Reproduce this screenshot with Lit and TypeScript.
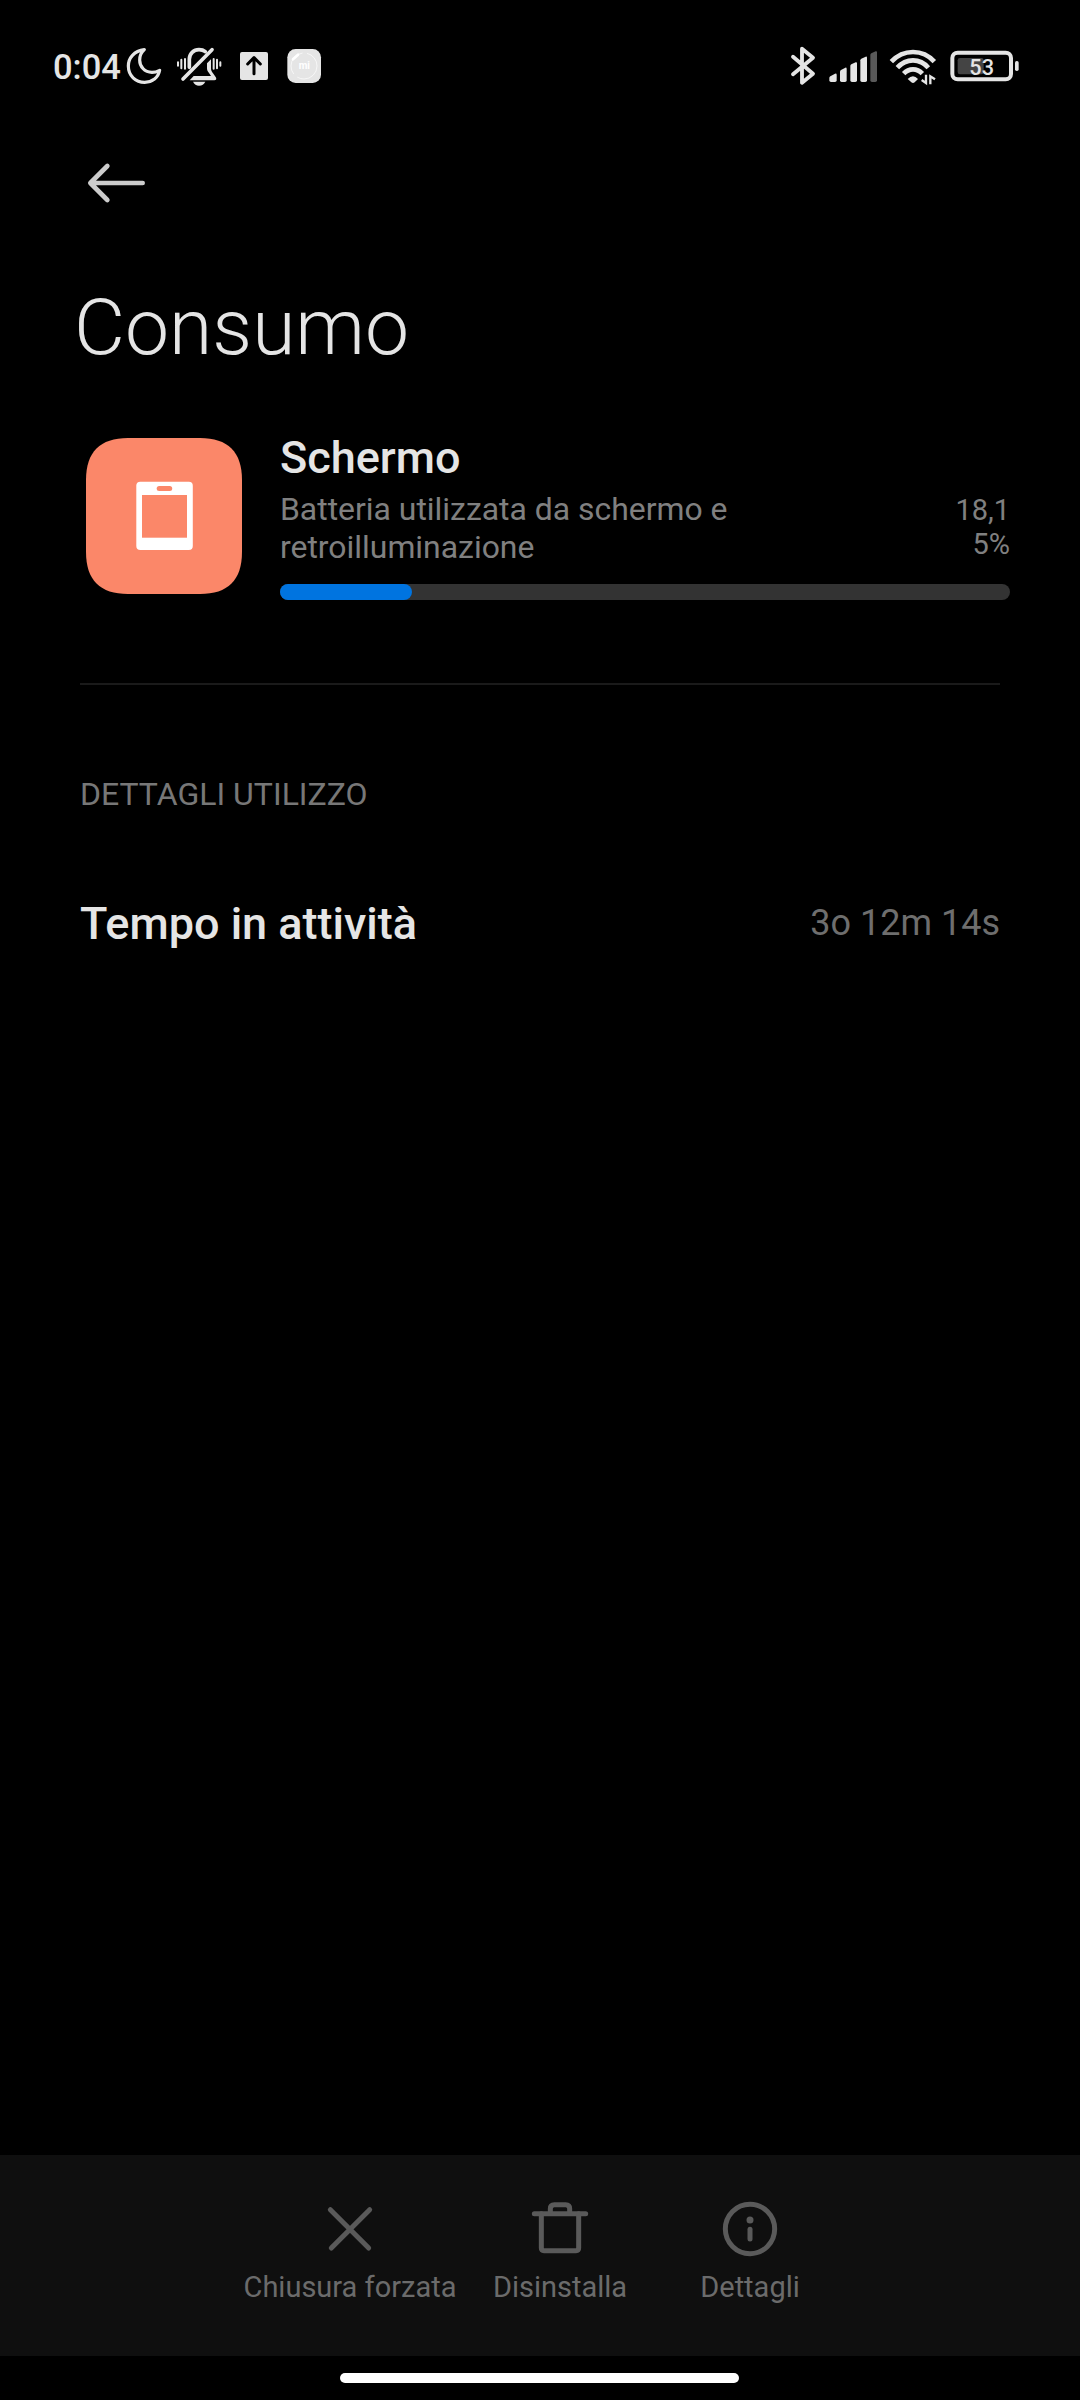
import { LitElement, html, css, svg } from "lit";
import { customElement, property } from "lit/decorators.js";

@customElement("status-bar")
class StatusBar extends LitElement {
  static styles = css`
    :host { display: block; }
    .bar { display: flex; justify-content: space-between; height: 132px; padding: 0 61px 0 53px; box-sizing: border-box; }
    .side { display: flex; align-items: center; }
    .time { font-size: 34.5px; font-weight: 500; line-height: 40px; color: #e5e5e5; width: 72px; padding-top: 2px; white-space: nowrap; }
    svg { display: block; flex: none; }
    .bell { margin-left: 13px; }
    .up { margin-left: 17px; }
    .mi { margin-left: 17px; }
    .signal { margin-left: 11px; }
    .wifi { margin-left: 11px; }
    .battery { margin-left: 13px; }
    .pct { font-family: Roboto, sans-serif; font-weight: 500; font-size: 67px; }
    .brand { font-family: Roboto, sans-serif; font-weight: 700; font-size: 32px; }
  `;
  render() {
    return html`<div class="bar">
      <div class="side">
        <span class="time">0:04</span>
        <svg class="moon" width="38" height="40" viewBox="255 48 114 120" fill="none" stroke="#e5e5e5" stroke-width="9.5" stroke-linejoin="round">
          <path d="M313 59C282 63 265 84 265 108C265 137 287 157 314 157C337 157 355 143 359 121C351 125 344 127 336 127C313 127 299 109 299 90C299 77 304 67 313 59Z" />
        </svg>
        <svg class="bell" width="46" height="40" viewBox="408 48 138 120" fill="none" stroke="#e5e5e5" stroke-linecap="round">
          <path stroke-width="11" d="M448 112V88C448 71 461 59 477 59C485 59 491 61 496 65" />
          <path stroke-width="11" d="M429 147L516 59" />
          <path stroke="none" fill="#e5e5e5" d="M513 88V115C513 121 515 125 519 130L527 141C531 147 528 151 523 151H449L461 138H513L507 129C503 124 501 121 501 115V100Z" />
          <path stroke="none" fill="#e5e5e5" d="M459 155H496C492 163 486 167 477 167C469 167 463 163 459 155Z" />
          <path stroke-width="6" d="M414 97V107M424 89V115M435 87V116M521 87V116M531 89V115M541 97V107" />
        </svg>
        <svg class="up" width="30" height="40" viewBox="597 48 90 120">
          <rect x="600" y="66" width="84" height="84" rx="6" fill="#e5e5e5" />
          <path d="M642 131V84M623 102L642 83L661 102" fill="none" stroke="#000" stroke-width="9" stroke-linecap="round" stroke-linejoin="round" />
        </svg>
        <svg class="mi" width="36" height="40" viewBox="738 48 108 120">
          <rect x="742" y="57" width="101" height="102" rx="25" fill="#e5e5e5" />
          <circle cx="792" cy="108" r="39" fill="none" stroke="#fff" stroke-width="2" stroke-dasharray="82 14" />
          <path d="M759 88L774 74" stroke="#fff" stroke-width="8" stroke-linecap="round" />
          <text class="brand" x="793" y="118" text-anchor="middle" fill="#fff" textLength="34" lengthAdjust="spacingAndGlyphs">mi</text>
        </svg>
      </div>
      <div class="side">
        <svg width="27" height="42" viewBox="60 45 81 126" fill="none" stroke="#e5e5e5" stroke-width="11.5" stroke-linejoin="round" stroke-linecap="round">
          <path d="M69 80L129 131L96 158V56L129 83L69 133" />
        </svg>
        <svg class="signal" width="50" height="40" viewBox="174 48 150 120" fill="#e5e5e5">
          <path d="M178 144Q178 141 181 139L195 131Q200 129 200 134V151Q200 156 195 156H183Q178 156 178 151Z" />
          <path d="M210 125Q210 122 213 120L226 113Q230 112 230 116V151Q230 156 225 156H215Q210 156 210 151Z" />
          <path d="M241 108Q241 105 244 103L257 97Q261 96 261 100V151Q261 156 256 156H246Q241 156 241 151Z" />
          <path d="M271 91Q271 88 274 86L287 80Q291 79 291 83V151Q291 156 286 156H276Q271 156 271 151Z" />
          <path fill="#595959" d="M301 75Q301 72 304 70L317 64Q321 63 321 67V151Q321 156 316 156H306Q301 156 301 151Z" />
        </svg>
        <svg class="wifi" width="48" height="40" viewBox="357 48 144 120" fill="none" stroke="#e5e5e5" stroke-width="14">
          <path d="M364 95Q391 66 429 66T493 95" />
          <path d="M382 113Q402 91 429 91T475 113" />
          <path d="M401 131Q413 118 429 118T457 131" />
          <path stroke="none" fill="#e5e5e5" d="M413 147Q429 130 444 147L434 157Q429 161 424 157Z" />
          <path stroke-width="7" d="M468 134V159L455 150M481 163V139L495 148" />
        </svg>
        <svg class="battery" width="69" height="40" viewBox="541 48 207 120">
          <rect x="548" y="68" width="176" height="80" rx="16" fill="none" stroke="#e5e5e5" stroke-width="12" />
          <rect x="564" y="84" width="78" height="49" rx="7" fill="#444" />
          <rect x="736" y="93" width="11" height="30" rx="5" fill="#e5e5e5" />
          <text class="pct" x="636" y="135" text-anchor="middle" fill="#e5e5e5" textLength="74" lengthAdjust="spacingAndGlyphs">53</text>
        </svg>
      </div>
    </div>`;
  }
}

@customElement("tool-item")
class ToolItem extends LitElement {
  @property() label = "";
  @property() icon = "";
  static styles = css`
    :host { display: block; }
    .item { display: flex; flex-direction: column; align-items: center; }
    svg { display: block; }
    .label { margin-top: 5px; font-size: 29px; line-height: 40px; color: #6b6b6b; white-space: nowrap; }
  `;
  private glyph() {
    switch (this.icon) {
      case "close":
        return svg`<path d="M-59 -58L56 57M59 -58L-56 57" />`;
      case "trash":
        return svg`<path d="M-77 -46H77" /><path d="M-29 -46V-61Q-29 -73 -17 -73H17Q29 -73 29 -61V-46" stroke-linecap="butt" /><path d="M-56 -46V57Q-56 65 -48 65H48Q56 65 56 57V-46" />`;
      default:
        return svg`<circle cx="0" cy="0" r="74" /><path d="M0 1V30" /><circle cx="0" cy="-27" r="10.5" fill="#5a5a5a" stroke="none" />`;
    }
  }
  render() {
    return html`<div class="item">
      <svg width="66" height="66" viewBox="-99 -99 198 198" fill="none" stroke="#5a5a5a" stroke-width="15" stroke-linecap="round" stroke-linejoin="round">${this.glyph()}</svg>
      <span class="label">${this.label}</span>
    </div>`;
  }
}

@customElement("app-root")
class AppRoot extends LitElement {
  private usage = 18.15;
  static styles = css`
    :host { display: block; font-family: Roboto, "Liberation Sans", sans-serif; }
    .screen { display: flex; flex-direction: column; width: 1080px; height: 2400px; background: #000; color: #e5e5e5; overflow: hidden; }
    svg { display: block; }
    .nav { height: 145px; padding: 30px 0 0 84px; box-sizing: border-box; }
    h1 { margin: 0; padding-left: 74px; font-size: 78.6px; font-weight: 300; line-height: 100px; height: 161px; }
    .app { display: flex; padding: 0 70px 0 86px; height: 245px; box-sizing: border-box; }
    .info { flex: 1; margin-left: 38px; margin-top: -6px; }
    .name { font-size: 45px; font-weight: 500; line-height: 51px; }
    .row { display: flex; justify-content: space-between; height: 101px; }
    .desc { width: 500px; margin-top: 7px; font-size: 31.9px; line-height: 38px; color: #808080; }
    .amount { margin-top: 10px; font-size: 29px; line-height: 34px; color: #808080; text-align: right; }
    .track { height: 16px; border-radius: 8px; background: #333; }
    .fill { height: 16px; border-radius: 8px; background: #0074e0; }
    .divider { height: 2px; margin: 0 80px; background: #1a1a1a; }
    .section { margin: 89px 80px 0; font-size: 32px; line-height: 40px; color: #777; }
    .detail { display: flex; justify-content: space-between; align-items: center; margin: 79px 80px 0; height: 60px; }
    .value { font-size: 36px; color: #6e6e6e; }
    .spacer { flex: 1; }
    .tools { display: grid; grid-template-columns: 230px 190px 190px; justify-content: center; height: 201px; padding-top: 41px; box-sizing: border-box; background: #0f0f0f; }
    .gesture { display: flex; height: 44px; padding: 17px 0 0 340px; box-sizing: border-box; }
    .pill { width: 399px; height: 10px; border-radius: 5px; background: #fff; }
  `;
  render() {
    return html`<div class="screen">
      <status-bar></status-bar>
      <div class="nav">
        <svg width="66" height="42" viewBox="72 67 198 126" fill="none" stroke="#ccc" stroke-width="14" stroke-linecap="round" stroke-linejoin="round">
          <path d="M248 130H92M142 79L91 130L142 181" />
        </svg>
      </div>
      <h1>Consumo</h1>
      <div class="app">
        <svg width="156" height="156" viewBox="0 0 156 156">
          <path fill="#fb8769" d="M42 0H114C142 0 156 14 156 42V114C156 142 142 156 114 156H42C14 156 0 142 0 114V42C0 14 14 0 42 0Z" />
          <rect x="50.3" y="43.7" width="56.5" height="68.3" rx="4" fill="#fff" />
          <rect x="56" y="57" width="45" height="42.7" fill="#fb8769" />
          <rect x="70.7" y="48" width="15.5" height="5" rx="2.5" fill="#fb8769" />
        </svg>
        <div class="info">
          <div class="name">Schermo</div>
          <div class="row">
            <div class="desc">Batteria utilizzata da schermo e retroilluminazione</div>
            <div class="amount">18,1<br />5%</div>
          </div>
          <div class="track"><div class="fill" style="width:${this.usage}%"></div></div>
        </div>
      </div>
      <div class="divider"></div>
      <div class="section">DETTAGLI UTILIZZO</div>
      <div class="detail">
        <span class="name">Tempo in attività</span>
        <span class="value">3o 12m 14s</span>
      </div>
      <div class="spacer"></div>
      <div class="tools">
        <tool-item icon="close" label="Chiusura forzata"></tool-item>
        <tool-item icon="trash" label="Disinstalla"></tool-item>
        <tool-item icon="info" label="Dettagli"></tool-item>
      </div>
      <div class="gesture"><div class="pill"></div></div>
    </div>`;
  }
}
